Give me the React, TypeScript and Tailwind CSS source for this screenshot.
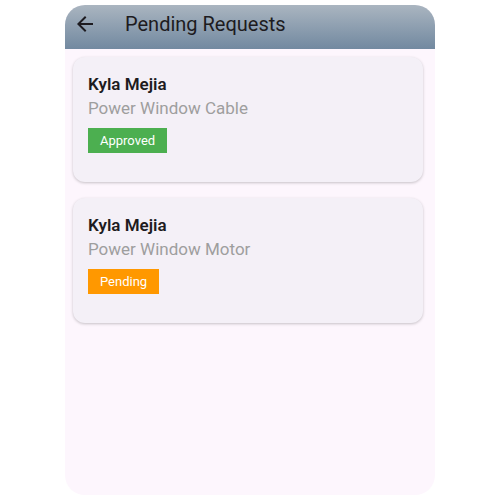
import React from "react";

type Request = { name: string; part: string; status: "Approved" | "Pending" };

const requests: Request[] = [
  { name: "Kyla Mejia", part: "Power Window Cable", status: "Approved" },
  { name: "Kyla Mejia", part: "Power Window Motor", status: "Pending" },
];

function RequestCard({ req }: { req: Request }) {
  return (
    <div className="ml-2 mr-3 rounded-xl bg-[#f4f0f7] pl-[15px] pt-[15px] pb-[29px] shadow-[0_1px_3px_rgba(0,0,0,0.22)]">
      <div className="text-[17px] leading-6 font-semibold text-[#1d1b20]">{req.name}</div>
      <div className="text-[17px] leading-6 text-[#9e9e9e]">{req.part}</div>
      <div className="mt-2 flex">
        {req.status === "Approved" ? (
          <span className="flex h-[25px] items-center bg-[#4caf50] px-3 text-[13px] text-white">Approved</span>
        ) : (
          <span className="flex h-[25px] items-center bg-[#ff9800] px-3 text-[13px] text-white">Pending</span>
        )}
      </div>
    </div>
  );
}

export default function App() {
  return (
    <div className="flex h-[500px] w-[500px] justify-center bg-white pt-[5px] font-['Roboto',sans-serif]">
      <div className="flex h-[490px] w-[370px] flex-col overflow-hidden rounded-[20px] bg-[#fdf6fd]">
        <header className="flex h-[44px] items-center bg-gradient-to-b from-[#aab5c0] to-[#7289a0] pb-[6px] pl-[8px]">
          <svg width="24" height="24" viewBox="0 0 24 24" className="text-[#1d1b20]">
            <path d="M20 11H7.83l5.59-5.59L12 4l-8 8 8 8 1.41-1.41L7.83 13H20v-2z" fill="currentColor" />
          </svg>
          <h1 className="ml-[28px] text-[20px] text-[#1d1b20]">Pending Requests</h1>
        </header>
        <div className="mt-2 flex flex-col gap-4">
          {requests.map((r, i) => (
            <RequestCard key={i} req={r} />
          ))}
        </div>
      </div>
    </div>
  );
}
